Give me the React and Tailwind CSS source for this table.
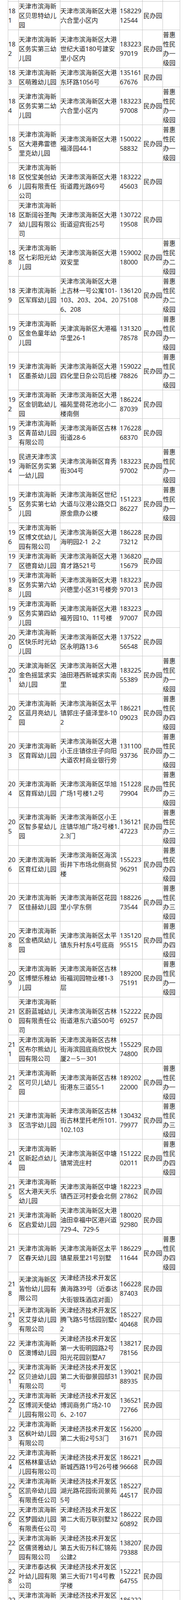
import React from "react";

const rows = [
  [181, "天津市滨海新区贝思特幼儿园", "天津市滨海新区大港|六合里小区内", "15822912544", ""],
  [182, "天津市滨海新区务实第三幼儿园", "天津市滨海新区大港|世纪大道180号建安|里小区内", "18322397019", "一"],
  [183, "天津市滨海新区萌雅幼儿园", "天津市滨海新区大港|东环路1056号", "13516167676", ""],
  [184, "天津市滨海新区务实第二幼儿园", "天津市滨海新区大港|六合里小区内", "18322397008", "一"],
  [185, "天津市滨海新区大港弗雷德里克幼儿园", "天津市滨海新区大港|福泽园44-1", "15002258832", "一"],
  [186, "天津市滨海新区悦宝美创幼儿园有限责任公司", "天津市滨海新区大港|街道霞光路69号", "18322245603", ""],
  [187, "天津市滨海新区斯阔谷圣陶幼儿园有限公司", "天津市滨海新区大港|街道迎宾街25号", "13072219508", ""],
  [188, "天津市滨海新区七彩阳光幼儿园", "天津市滨海新区大港|双安里", "15900218000", "二"],
  [189, "天津市滨海新区军辉幼儿园", "天津市滨海新区大港|上古林一号公寓101-|103、203、204、20|6、208", "13612075108", "二"],
  [190, "天津市滨海新区金色童年幼儿园", "天津滨海新区大港福|华里26-1", "13132078578", "一"],
  [191, "天津市滨海新区墨茶幼儿园", "天津市滨海新区大港|四化里日杂公司后楼", "15902278826", "二"],
  [192, "天津市滨海新区金钥匙幼儿园", "天津市滨海新区大港|福苑里荷花池北小二|楼南侧", "18622487039", ""],
  [193, "天津市滨海新区青苗幼儿园有限公司", "天津市滨海新区古林|街道28-6", "17622868370", ""],
  [194, "民进天津市滨海新区务实第一幼儿园", "天津市滨海新区育秀|街304号", "18322397002", "一"],
  [195, "天津市滨海新区务实第七幼儿园", "天津市滨海新区世纪|大道与汉港公路交口|原金鼎办公楼", "15122386227", "一"],
  [196, "天津市滨海新区博文优幼儿园有限公司", "天津市滨海新区大港|海明园2-1\u00a0\u00a02-2", "18622873212", ""],
  [197, "天津市滨海新区德育幼儿园", "天津市滨海新区大港|育才路521号", "13682015679", ""],
  [198, "天津市滨海新区务实第六幼儿园", "天津市滨海新区大港|兴德里小区31号楼旁", "18322397013", ""],
  [199, "天津市滨海新区务实第四幼儿园", "天津市滨海新区大港|福芳园10、11号楼", "18322397007", ""],
  [200, "天津市滨海新区快乐时光幼儿园", "天津市滨海新区大港|区永明路13-6", "13752256548", ""],
  [201, "天津滨海新区金色摇篮求实幼儿园", "天津市滨海新区大港|油田港西新城求实南|里", "18322555389", "一"],
  [202, "天津市滨海新区蓝月亮幼儿园", "天津市滨海新区太平|镇郭庄子盛泽里8-10|2", "18622109023", "四"],
  [203, "天津市滨海新区育晖幼儿园", "天津市滨海新区大港|小王庄镇徐庄子向阳|大道农村商业银行旁", "13110093736", "二"],
  [204, "天津市滨海新区育辉幼儿园", "天津市滨海新区华旭|广场1号楼1.2号", "15122879904", "三"],
  [205, "天津市滨海新区智多星幼儿园", "天津市滨海新区小王|庄镇华旭广场2号楼1.|2.3门", "13612147223", "三"],
  [206, "天津市滨海新区育红幼儿园", "天津市滨海新区海滨|街井下市场北侧商贸|楼", "15522396291", "四"],
  [207, "天津市滨海新区佳赫幼儿园", "天津市滨海新区花园|里小学东侧", "18822673544", "三"],
  [208, "天津市滨海新区金栖凤幼儿园", "天津市滨海新区太平|镇东升村东4号底商", "13512095515", "四"],
  [209, "天津市滨海新区博塑乐稚幼儿园", "天津市滨海新区古林|街福润园物业楼1-3|层", "18920075191", "一"],
  [210, "天津市滨海新区蔚蓝城幼儿园有限责任公司", "天津市滨海新区古林|街道港东六道500号", "15222269257", ""],
  [211, "天津市滨海新区布尔熊幼儿园有限公司", "天津市滨海新区古林|街海滨园底商欣悦大|厦2－5－301", "15522974800", ""],
  [212, "天津市滨海新区可贝儿幼儿园", "天津市滨海新区古林|街港东三道55-1", "18920222000", "一"],
  [213, "天津市滨海新区浩宇幼儿园", "天津市滨海新区古林|街古林里托老所101.|102.103", "13043279977", "三"],
  [214, "天津市滨海新区新起点幼儿园", "天津市滨海新区中塘|镇常流庄村", "15122202011", "四"],
  [215, "天津市滨海新区大港天天乐幼儿园", "天津市滨海新区中塘|镇西正河村委会北侧", "18222327862", ""],
  [216, "天津市滨海新区启爱幼儿园", "天津市滨海新区大港|油田幸福中区港兴道|729-4、729-5", "18002092980", ""],
  [217, "天津市滨海新区春天幼儿园", "天津市滨海新区太平|镇星辰里21号别墅", "18622911644", "四"],
  [218, "天津滨海新区皆怡幼儿园有限公司", "天津经济技术开发区|黄海路39号（近泰达|大街银珠酒店对面）", "16622887403", ""],
  [219, "天津市滨海新区艾芽幼儿园有限公司", "天津经济技术开发区|腾飞路5号恬园别墅c|2", "18522740468", ""],
  [220, "天津市滨海新区澳博幼儿园", "天津经济技术开发区|第一大街明园路2号|阳光花园别墅A7", "13821778156", ""],
  [221, "天津市滨海新区贝迪幼儿园有限公司", "天津经济技术开发区|第二大街御景园邸31|号", "13902188935", ""],
  [222, "天津市滨海新区博润天使幼儿园有限公司", "天津经济技术开发区|博润商务广场2-10|6、2-107", "13652172766", ""],
  [223, "天津市滨海新区枫叶幼儿园有限公司", "天津经济技术开发区|第二大街2号53门", "15620031671", ""],
  [224, "天津市滨海新区格林童话幼儿园有限公司", "天津经济技术开发区|新城西路19号26号楼", "18622196668", ""],
  [225, "天津市滨海新区凯帝幼儿园有限责任公司", "天津经济技术开发区|湖光路花园街润景苑|5号", "18522744517", ""],
  [226, "天津市滨海新区梦圆幼儿园有限责任公司", "天津经济技术开发区|第二大街万联别墅32|号", "18622260892", ""],
  [227, "天津市滨海新区儒贤雅幼儿园有限公司", "天津经济技术开发区|第五大街万科汇锦苑|公建2", "13820779388", ""],
  [228, "天津市泰达枫叶幼儿园有限公司", "天津经济技术开发区|第三大街71号4号教|学楼", "15222164755", ""],
  [229, "天津市滨海新区希桥幼儿园有限公司", "天津经济技术开发区|第二大节御景园邸6|号", "18622262187", ""],
  [230, "天津市滨海新区童心幼儿园有限公司", "天津经济技术开发区|海云街9号", "18698052192", ""],
  [231, "天津市滨海新区希子幼儿园", "天津经济技术开发区|捷达路5号D区2门", "18222795034", ""],
  [232, "天津自贸试验区瑞德幼儿园", "天津市滨海高新区自|贸试验区西七道与中|环西路交口商务杰座|凤凰墅60号楼", "18920967236", ""],
  [233, "天津启乐原幼儿园有限公司", "天津空港紧急去中环|东路55号悦城广场C4|-201、202", "18630980984", ""],
  [234, "天津自贸试验区育树家湖滨幼儿园有限责任公司", "天津自贸试验区（空|港经济区）中环东路|55号", "18920486837", ""],
  [235, "天津美加詹妮幼儿园有限公司", "天津市滨海高新区华|苑产业区科馨别墅68|号", "18622535560", ""],
  [236, "天津生态城爱绿幼儿园", "天津生态城新一街20|2号", "022-66381188", ""],
  [237, "天津市滨海新区艾毅国际幼儿园责任有限公司", "天津生态城和风路31|2号", "022-66227888转0", ""],
  [238, "天津生态城海丽达中福幼儿园有限公司", "天津生态城荣盛路25|1号", "022-59553909", ""],
  [239, "天津市滨海新区爱尔福幼儿园有限公司", "天津市滨海新区中心|商务区迎宾大道944|号、956号", "13672102278", ""],
  [240, "天津市滨海新区泉嘉幼儿园", "天津市滨海新区大港|海川园13号", "15122576859", ""],
];

const ROW_H = {
  2: "h-[49px]",
  3: "h-[73px]",
  4: "h-[97px]",
  tall: "h-[85px]",
};

function chunk(s, n) {
  const chars = Array.from(s);
  const out = [];
  for (let i = 0; i < chars.length; i += n) out.push(chars.slice(i, i + n).join(""));
  return out;
}

function Lines({ lines, tall, indentLast }) {
  return lines.map((l, i) => (
    <div
      key={i}
      className={
        (tall ? "h-[28px] leading-[28px]" : "h-[24px] leading-[24px]") +
        " shrink-0 whitespace-nowrap" +
        (indentLast && i === lines.length - 1 ? " pl-[13px]" : "")
      }
    >
      {l}
    </div>
  ));
}

function Cell({ children, extra }) {
  return (
    <div className={"border-l border-[#c4c4c4] flex flex-col justify-center min-w-0 min-h-0 " + (extra || "")}>
      {children}
    </div>
  );
}

export default function App() {
  return (
    <div className="bg-white w-[480px] min-h-[4951px] text-[16px] leading-[24px] text-[#222222] font-['Noto_Sans','Noto_Sans_CJK_SC',sans-serif]">
      <div className="ml-[20px] w-[440px]">
        <div className="grid grid-cols-[27px_106px_152px_58px_52px_44px] border-r border-[#c4c4c4] h-[3px]">
          <div className="border-l border-[#c4c4c4]" />
          <div className="border-l border-[#c4c4c4]" />
          <div className="border-l border-[#c4c4c4]" />
          <div className="border-l border-[#c4c4c4]" />
          <div className="border-l border-[#c4c4c4]" />
          <div className="border-l border-[#c4c4c4]" />
        </div>
        {rows.map(([num, name, addr, phone, level]) => {
          const n = String(num);
          const nameLines = chunk(name, 6);
          const addrLines = addr.split("|");
          const phoneLines = chunk(phone, 6);
          const count = Math.max(2, nameLines.length, addrLines.length, phoneLines.length, level ? 4 : 0);
          const h = num === 218 ? ROW_H.tall : ROW_H[count];
          return (
            <div
              key={num}
              className={"grid grid-cols-[27px_106px_152px_58px_52px_44px] grid-rows-1 border-t border-r border-[#c4c4c4] " + h}
            >
              <Cell>
                <Lines lines={[n.slice(0, 2), n.slice(2)]} />
              </Cell>
              <Cell>
                <Lines lines={nameLines} />
              </Cell>
              <Cell>
                <Lines lines={addrLines} tall={num === 218} />
              </Cell>
              <Cell>
                <Lines lines={phoneLines} indentLast={num === 237} />
              </Cell>
              <Cell extra="pl-[2px]">
                <Lines lines={["民办园"]} />
              </Cell>
              <Cell>
                {level ? <Lines lines={["普惠", "性民", "办" + level, "级园"]} /> : null}
              </Cell>
            </div>
          );
        })}
        <div className="border-t border-[#c4c4c4]" />
      </div>
    </div>
  );
}
